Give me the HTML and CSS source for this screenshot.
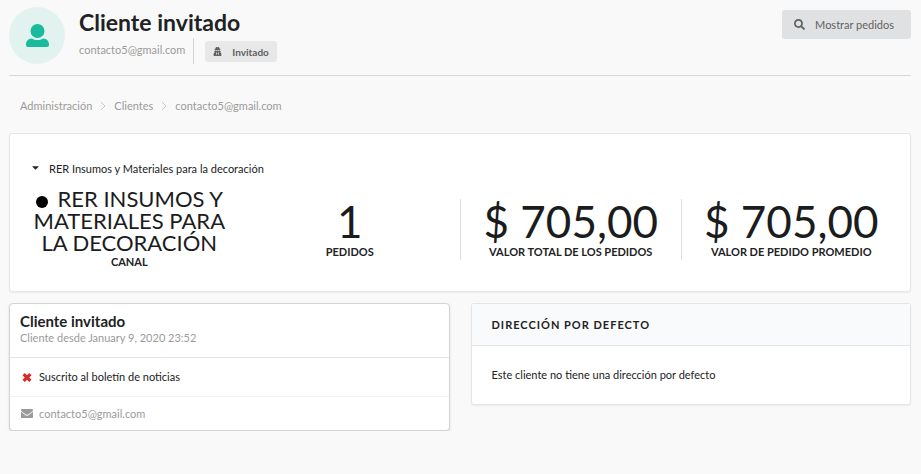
FILE: index.html
```html
<!DOCTYPE html>
<html lang="es">
<head>
<meta charset="utf-8">
<title>Cliente invitado</title>
<link rel="stylesheet" href="styles.css">
</head>
<body>
<header class="page-header">
  <div class="avatar">
    <svg class="avatar-icon" viewBox="0 0 23 23" aria-hidden="true"><circle cx="11.500" cy="7" r="7"/><path d="M6 14.500c1.600 1 3.500 1.600 5.500 1.600s3.900-.6 5.500-1.600c3.800.1 6 2.600 6 6v.5a2 2 0 0 1-2 2H2a2 2 0 0 1-2-2v-.5c0-3.400 2.200-5.900 6-6z"/></svg>
  </div>
  <div class="identity">
    <h1>Cliente invitado</h1>
    <div class="identity-meta">
      <a class="identity-mail" href="#">contacto5@gmail.com</a>
      <span class="tag"><svg class="tag-icon" viewBox="0 0 448 512" aria-hidden="true"><path d="M383.900 308.300l23.900-62.600c4-10.500-3.700-21.700-15-21.700h-58.500c11-18.900 17.800-40.600 17.800-64v-.3c39.200-7.800 64-19.100 64-31.700 0-13.300-27.300-25.100-70.100-33-9.200-32.800-27-65.800-40.600-82.800-9.500-11.900-25.900-15.600-39.500-8.800l-27.600 13.800c-9 4.500-19.600 4.500-28.600 0L182.100 3.400c-13.600-6.800-30-3.100-39.500 8.800-13.500 17-31.400 50-40.600 82.800-42.700 7.900-70 19.700-70 33 0 12.600 24.800 23.900 64 31.700v.3c0 23.400 6.800 45.100 17.800 64H56.300c-11.500 0-19.200 11.700-14.700 22.300l25.800 60.200C27.300 329.800 0 372.700 0 422.400v44.800C0 491.900 20.100 512 44.800 512h358.400c24.700 0 44.800-20.100 44.800-44.800v-44.800c0-48.400-25.800-90.400-64.100-114.100zM176 480l-41.600-192 49.600 32 24 40-32 120zm96 0l-32-120 24-40 49.600-32L272 480zm41.700-298.500c-3.900 11.900-7 24.600-16.500 33.400-10.100 9.300-48 22.400-64-25-2.800-8.400-15.400-8.400-18.300 0-17 50.200-56 32.400-64 25-9.500-8.800-12.700-21.500-16.500-33.400-.8-2.500-6.300-5.700-6.300-5.800v-10.800c28.300 3.600 61 5.800 96 5.800s67.700-2.100 96-5.800v10.800c-.1.100-5.600 3.200-6.400 5.800z"/></svg>Invitado</span>
    </div>
  </div>
  <a class="orders-button" href="#"><svg class="button-icon" viewBox="0 0 512 512" aria-hidden="true"><path d="M505 442.700L405.300 343c-4.500-4.500-10.600-7-17-7H372c27.600-35.300 44-79.700 44-128C416 93.100 322.900 0 208 0S0 93.100 0 208s93.100 208 208 208c48.300 0 92.700-16.400 128-44v16.300c0 6.400 2.500 12.500 7 17l99.700 99.700c9.400 9.400 24.600 9.400 33.900 0l28.300-28.300c9.400-9.400 9.400-24.600.1-34zM208 336c-70.700 0-128-57.200-128-128 0-70.700 57.200-128 128-128 70.700 0 128 57.200 128 128 0 70.700-57.200 128-128 128z"/></svg>Mostrar pedidos</a>
</header>

<nav class="breadcrumb" aria-label="Ruta">
  <a href="#">Administración</a>
  <svg viewBox="0 0 6 10" aria-hidden="true"><path d="M1 1l4 4-4 4"/></svg>
  <a href="#">Clientes</a>
  <svg viewBox="0 0 6 10" aria-hidden="true"><path d="M1 1l4 4-4 4"/></svg>
  <a href="#">contacto5@gmail.com</a>
</nav>

<main>
  <section class="panel statistics-panel">
    <button class="channel-toggle" type="button" aria-expanded="true"><svg viewBox="0 0 8 4" aria-hidden="true"><path d="M0 0h8L4 4z"/></svg>RER Insumos y Materiales para la decoración</button>
    <div class="statistics">
      <div class="statistic">
        <div class="value value-text"><span class="channel-dot"></span>RER INSUMOS Y MATERIALES PARA LA DECORACIÓN</div>
        <div class="label">CANAL</div>
      </div>
      <div class="statistic">
        <div class="value">1</div>
        <div class="label">PEDIDOS</div>
      </div>
      <div class="statistic divided">
        <div class="value">$ 705,00</div>
        <div class="label">VALOR TOTAL DE LOS PEDIDOS</div>
      </div>
      <div class="statistic divided">
        <div class="value">$ 705,00</div>
        <div class="label">VALOR DE PEDIDO PROMEDIO</div>
      </div>
    </div>
  </section>

  <div class="columns">
    <section class="card">
      <div class="card-head">
        <h2>Cliente invitado</h2>
        <p>Cliente desde January 9, 2020 23:52</p>
      </div>
      <div class="card-row">
        <svg class="row-icon cross" viewBox="0 0 10 10" aria-hidden="true"><path d="M2.500 0L5 2.500 7.500 0 10 2.500 7.500 5 10 7.500 7.500 10 5 7.500 2.500 10 0 7.500 2.500 5 0 2.500z"/></svg>
        Suscrito al boletín de noticias
      </div>
      <div class="card-row card-extra">
        <svg class="row-icon" viewBox="0 64 512 384" aria-hidden="true"><path d="M502.300 190.800c3.900-3.100 9.700-.2 9.700 4.700V400c0 26.500-21.500 48-48 48H48c-26.500 0-48-21.500-48-48V195.600c0-5 5.700-7.800 9.700-4.700 22.400 17.400 52.100 39.500 154.100 113.600 21.100 15.400 56.700 47.800 92.200 47.600 35.700.3 72-32.800 92.300-47.600 102-74.100 131.600-96.300 154-113.700zM256 320c23.200.4 56.600-29.200 73.400-41.400 132.700-96.300 142.800-104.700 173.400-128.700 5.800-4.500 9.200-11.500 9.200-18.900v-19c0-26.500-21.500-48-48-48H48c-26.500 0-48 21.500-48 48v19c0 7.400 3.400 14.300 9.200 18.900 30.600 23.900 40.700 32.400 173.400 128.700 16.800 12.200 50.200 41.800 73.400 41.400z"/></svg>
        <a href="#">contacto5@gmail.com</a>
      </div>
    </section>
    <section class="panel address">
      <h2>DIRECCIÓN POR DEFECTO</h2>
      <p>Este cliente no tiene una dirección por defecto</p>
    </section>
  </div>
</main>
</body>
</html>
```
FILE: styles.css
```css
* { box-sizing: border-box; }

body {
  margin: 0;
  padding: 7px 10px 0 9px;
  background: #f9f9f9;
  color: #212223;
  font: 11px/16px Lato, "Liberation Sans", sans-serif;
}

h1, h2, p { margin: 0; }
a { color: inherit; text-decoration: none; }
svg { flex: none; fill: currentColor; }

.page-header {
  display: flex;
  align-items: flex-start;
  padding-bottom: 11px;
  border-bottom: 1px solid #d7d8d9;
}

.avatar {
  display: flex;
  align-items: center;
  justify-content: center;
  width: 56px;
  height: 57px;
  border-radius: 50%;
  background: #e2f3ef;
  color: #1abb9c;
}
.avatar-icon { width: 23px; height: 23px; }

.identity { flex: 1; margin-left: 14px; }
.identity h1 {
  font-size: 23px;
  line-height: 31px;
}
.identity-meta {
  display: flex;
  align-items: flex-start;
  color: #9b9b9b;
}
.identity-mail {
  height: 26px;
  margin-right: 11px;
  padding: 4px 8px 0 0;
  border-right: 1px solid #d4d4d5;
}
.tag {
  display: flex;
  align-items: center;
  height: 21px;
  margin-top: 3px;
  padding: 0 8px;
  border-radius: 3px;
  background: #e8e8e8;
  color: #606060;
  font-size: 10px;
  font-weight: 700;
}
.tag-icon { width: 9px; height: 9px; margin-right: 10px; }

.orders-button {
  display: flex;
  align-items: center;
  height: 29px;
  margin-top: 3px;
  padding: 0 17px 0 12px;
  border-radius: 3px;
  background: #e0e1e2;
  color: #606162;
}
.button-icon { width: 11px; height: 11px; margin-right: 10px; }

.breadcrumb {
  display: flex;
  align-items: center;
  gap: 8px;
  padding: 22px 11px 19px;
  color: #9b9b9b;
}
.breadcrumb svg {
  width: 6px;
  height: 10px;
  fill: none;
  stroke: #c6c6c6;
}

.page-header { padding-bottom: 11px; height: 69px; }

.panel {
  border: 1px solid #e5e6e6;
  border-radius: 3px;
  background: #fff;
  box-shadow: 0 1px 2px #22242611;
}

.statistics-panel { padding: 27px 9px 21px; }
.channel-toggle {
  display: flex;
  align-items: center;
  margin: 0 0 11px 13px;
  padding: 0;
  border: 0;
  background: none;
  color: inherit;
  font: inherit;
}
.channel-toggle svg { width: 7px; height: 4px; margin-right: 10px; margin-bottom: 3px; }

.statistics {
  display: grid;
  grid-template-columns: repeat(4, 1fr);
  align-items: center;
}
.statistic { padding: 0 11px; text-align: center; }
.divided { border-left: 1px solid #dededf; }
.value {
  color: #1b1c1d;
  font-size: 44px;
  line-height: 45px;
}
.value-text { font-size: 22px; line-height: 22px; }
.channel-dot {
  display: inline-block;
  width: 12px;
  height: 12px;
  margin-right: 10px;
  border-radius: 50%;
  background: #000;
  vertical-align: -1px;
}
.label { font-weight: 700; }

.columns {
  display: grid;
  grid-template-columns: 1fr 1fr;
  align-items: start;
  gap: 21px;
  margin-top: 11px;
}

.card {
  border: 1px solid #d4d4d5;
  border-radius: 4px;
  background: #fff;
  box-shadow: 0 1px 2px #d4d4d5;
}
.card-head { padding: 9px 10px 11px; }
.card-head h2 { font-size: 15px; line-height: 16px; }
.card-head p { color: #9b9b9b; line-height: 17px; }
.card-row {
  display: flex;
  align-items: center;
  height: 39px;
  padding: 0 11px;
  border-top: 1px solid #e5e6e6;
}
.row-icon { width: 12px; height: 9px; margin-right: 6px; }
.cross { color: #db2828; }
.card-extra { height: 34px; border-color: #f2f2f2; color: #9b9b9b; }

.address h2 {
  padding: 13px 20px 12px;
  border-bottom: 1px solid #e5e6e6;
  background: #f9fafb;
  font-size: 11px;
  letter-spacing: 1px;
}
.address p { padding: 21px 20px 21px; }
```
